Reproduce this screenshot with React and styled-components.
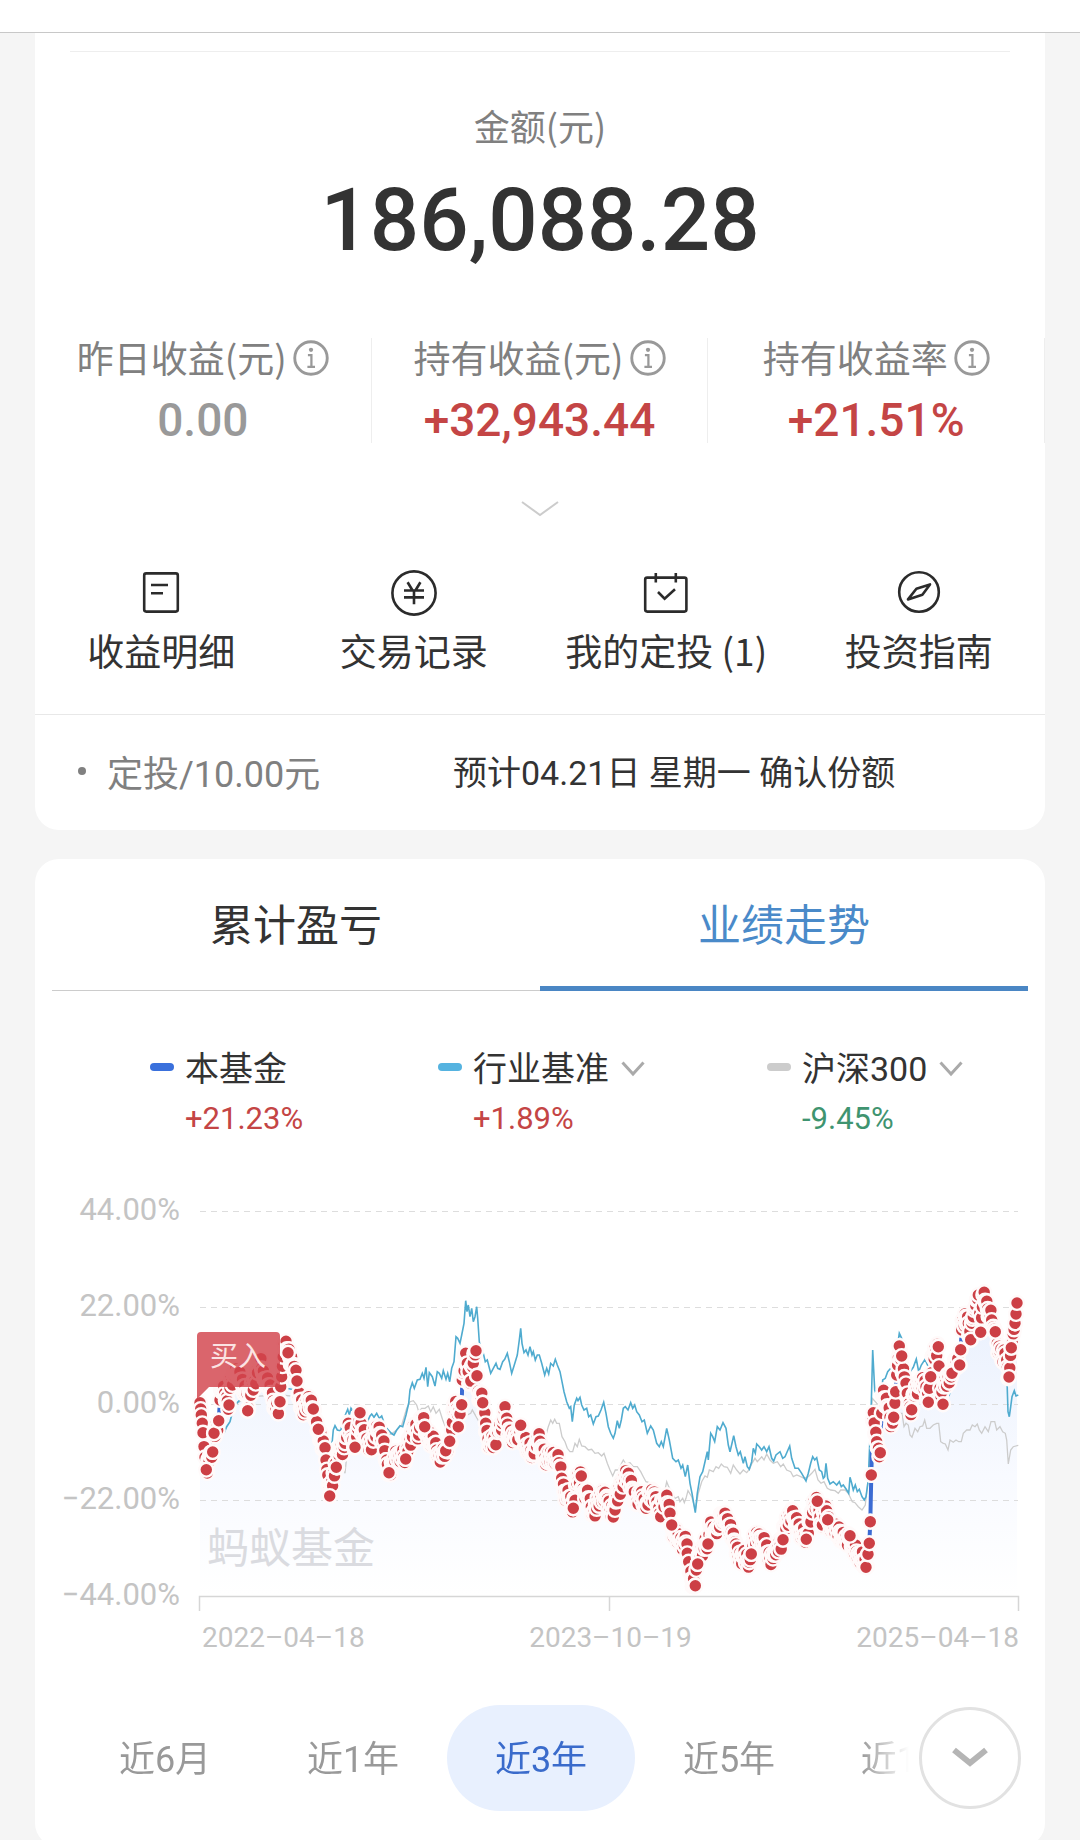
import React, { useState } from 'react';
import styled, { createGlobalStyle } from 'styled-components';

const GlobalStyle = createGlobalStyle`
  * {
    box-sizing: border-box;
  }

  body {
    margin: 0;
    background: #f5f5f5;
    color: #333333;
    font-family: Roboto, 'Noto Sans CJK SC', sans-serif;
  }

  button {
    padding: 0;
    border: 0;
    background: none;
    color: inherit;
    font: inherit;
    cursor: pointer;
  }

  a {
    color: inherit;
    text-decoration: none;
  }

  svg {
    display: block;
  }
`;

const TopBar = styled.header`
  height: 33px;
  background: #ffffff;
  border-bottom: 1px solid #c8c8c8;
`;

const Page = styled.main`
  padding: 0 35px 24px;
  display: flex;
  flex-direction: column;
  gap: 29px;
`;

const Card = styled.section`
  background: #ffffff;
  border-radius: ${({ $flatTop }) => ($flatTop ? '0 0 24px 24px' : '24px')};
  overflow: hidden;
`;

const TopRule = styled.hr`
  margin: 18px 35px 0;
  border: 0;
  border-top: 1px solid #eeeeee;
`;

const Balance = styled.div`
  margin-top: 46px;
  text-align: center;
`;

const BalanceLabel = styled.h1`
  margin: 0;
  font-family: 'Noto Sans CJK SC', sans-serif;
  font-size: 36px;
  font-weight: 400;
  line-height: 54px;
  color: #808080;
`;

const BalanceValue = styled.div`
  margin-top: 18px;
  font-size: 87px;
  font-weight: 500;
  line-height: 100px;
`;

const Stats = styled.div`
  margin-top: 68px;
  display: grid;
  grid-template-columns: repeat(3, 1fr);
`;

const Stat = styled.div`
  display: flex;
  flex-direction: column;
  align-items: center;
  gap: 21px;
  border-right: 1px solid #eeeeee;
`;

const StatLabel = styled.div`
  display: flex;
  align-items: flex-end;
  gap: 6px;
  font-family: 'Noto Sans CJK SC', sans-serif;
  font-size: 37px;
  line-height: 38px;
  color: #808080;
`;

const StatValue = styled.div`
  font-size: 46px;
  font-weight: 500;
  line-height: 46px;
  color: ${({ $color }) => $color};
`;

const ExpandButton = styled.button`
  display: flex;
  align-items: center;
  justify-content: center;
  width: 80px;
  height: 40px;
  margin: 46px auto 0;
`;

const Actions = styled.nav`
  margin-top: 41px;
  padding-bottom: 41px;
  display: grid;
  grid-template-columns: repeat(4, 1fr);
  border-bottom: 1px solid #e8e8e8;
`;

const Action = styled.a`
  display: flex;
  flex-direction: column;
  align-items: center;
  gap: 11px;
  font-family: 'Noto Sans CJK SC', sans-serif;
  font-size: 37px;
  line-height: 46px;
`;

const PlanRow = styled.div`
  display: flex;
  align-items: center;
  height: 115px;
  padding: 0 0 4px 43px;
`;

const PlanName = styled.div`
  display: flex;
  align-items: center;
  gap: 21px;
  width: 375px;
  font-size: 36px;
  color: #808080;

  &::before {
    content: '';
    width: 8px;
    height: 8px;
    border-radius: 50%;
    background: #808080;
  }
`;

const PlanNote = styled.div`
  font-size: 34px;
`;

const Tabs = styled.div`
  margin: 0 17px;
  display: grid;
  grid-template-columns: 1fr 1fr;
`;

const Tab = styled.button`
  height: 132px;
  padding-bottom: 6px;
  font-size: 43px;
  color: ${({ $active }) => ($active ? '#4a8ac9' : '#333333')};
  box-shadow: inset 0 ${({ $active }) => ($active ? '-5px #4a86c4' : '-1px #cccccc')};
`;

const Legend = styled.div`
  margin-top: 56px;
  padding: 0 88px 0 115px;
  display: grid;
  grid-template-columns: 288fr 329fr 190fr;
`;

const LegendItem = styled.div`
  min-width: 0;
  display: grid;
  grid-template-columns: 24px auto;
  column-gap: 11px;
  row-gap: 6px;
  align-items: center;
  justify-content: start;
  line-height: 44px;
`;

const Swatch = styled.span`
  height: 8px;
  margin-bottom: 4px;
  border-radius: 4px;
  background: ${({ $color }) => $color};
`;

const LegendName = styled.div`
  font-size: 34px;
  white-space: nowrap;

  button {
    display: flex;
    align-items: center;
    gap: 12px;
  }
`;

const LegendValue = styled.div`
  grid-column: 2;
  font-size: 31px;
  color: ${({ $down }) => ($down ? '#3f9470' : '#c44545')};
`;

const ChartRow = styled.div`
  margin-top: 49px;
  padding-right: 15px;
  display: flex;

  svg {
    flex: 1;
    min-width: 0;
  }
`;

const YAxis = styled.div`
  width: 145px;
  display: flex;
  flex-direction: column;
  justify-content: space-between;
  text-align: right;
  font-size: 31px;
  line-height: 40px;
  color: #c4c4c4;
`;

const XAxis = styled.div`
  margin-top: 5px;
  padding: 0 26px 0 167px;
  display: flex;
  justify-content: space-between;
  font-size: 28px;
  line-height: 36px;
  color: #c4c4c4;
`;

const Periods = styled.div`
  margin: 49px 24px 36px 36px;
  display: flex;
  align-items: center;
`;

const PeriodStrip = styled.div`
  flex: 1;
  min-width: 0;
  display: flex;
  overflow: hidden;
  mask-image: linear-gradient(to right, #000 calc(100% - 52px), transparent calc(100% - 4px));
`;

const Period = styled.button`
  flex: 0 0 188px;
  height: 106px;
  padding-bottom: 4px;
  border-radius: 53px;
  font-size: 36px;
  color: ${({ $active }) => ($active ? '#3a6bcb' : '#999999')};
  background: ${({ $active }) => ($active ? '#e8f0fe' : 'transparent')};
`;

const MoreButton = styled.button`
  flex: none;
  display: flex;
  align-items: center;
  justify-content: center;
  width: 102px;
  height: 102px;
  margin-left: 6px;
  border: 3px solid #e2e2e2;
  border-radius: 50%;
`;

const InfoIcon = () => (
  <svg width="36" height="36" viewBox="0 0 35 35" fill="none" stroke="#999999">
    <circle cx="17.5" cy="17.5" r="15.8" strokeWidth="2.8" />
    <circle cx="17.5" cy="9.6" r="2.1" fill="#999999" stroke="none" />
    <path d="M14.5 14.6h3.4v11.4M14 26.2h7.4" strokeWidth="2.2" />
  </svg>
);

const Chevron = ({ width, height, stroke, weight }) => (
  <svg width={width} height={height} viewBox={`0 0 ${width} ${height}`} fill="none">
    <path
      d={`M${weight / 2} ${weight / 2}L${width / 2} ${height - weight}L${width - weight / 2} ${weight / 2}`}
      stroke={stroke}
      strokeWidth={weight}
    />
  </svg>
);

const ActionIcon = ({ children }) => (
  <svg width="46" height="46" viewBox="0 0 46 46" fill="none" stroke="#2b2b2b" strokeWidth="2.6">
    {children}
  </svg>
);

const actions = [
  {
    label: '收益明细',
    icon: (
      <>
        <rect x="6.2" y="3.4" width="33.6" height="38.2" rx="2" />
        <path d="M13 15h17M13 23.3h12" />
      </>
    ),
  },
  {
    label: '交易记录',
    icon: (
      <>
        <circle cx="23" cy="23" r="21.6" />
        <path d="M16.6 12.3l5 8.2M29.4 12.3l-5 8.2M13 20.5h20M13 27.4h20M23 20.5v13.8" />
      </>
    ),
  },
  {
    label: '我的定投 (1)',
    icon: (
      <>
        <rect x="2.2" y="7.6" width="41.2" height="34" rx="2" />
        <path d="M12.8 3v9.4M32.8 3v9.4M15 22l6.6 6.6L32 19.2" />
      </>
    ),
  },
  {
    label: '投资指南',
    icon: (
      <>
        <circle cx="23" cy="22" r="19.8" />
        <path d="M34 14.4l-7.6 10.4L12 29.4l8.4-10.6z" strokeLinejoin="round" />
      </>
    ),
  },
];

const stats = [
  { label: '昨日收益(元)', value: '0.00', color: '#999999' },
  { label: '持有收益(元)', value: '+32,943.44', color: '#c44545' },
  { label: '持有收益率', value: '+21.51%', color: '#c44545' },
];

const legend = [
  { name: '本基金', value: '+21.23%', color: '#3a70dc' },
  { name: '行业基准', value: '+1.89%', color: '#55b3e0', select: true },
  { name: '沪深300', value: '-9.45%', color: '#cccccc', select: true, down: true },
];

const periods = ['近6月', '近1年', '近3年', '近5年', '近10年'];

// Series are stored as "x,y" samples at three units per chart pixel
const parse = (text) =>
  text
    .trim()
    .split(/\s+/)
    .map((pair) => pair.split(',').map(Number))
    .map(([x, y]) => [x / 3, y / 3 + 90]);

const toPath = (points) =>
  'M' + points.map(([x, y]) => `${x.toFixed(1)} ${y.toFixed(1)}`).join('L');

const industry = parse(`
  60,368 66,440 75,520 95,500 115,440 133,458 140,440 150,425 155,405 170,370 200,340 240,330 262,320
  290,345 320,325 345,330 360,325 380,360 400,400 420,450 440,500 457,482 460,450 465,437 472,450 482,452
  490,420 498,400 503,388 508,405 513,385 520,395 530,400 545,425 560,430 570,408 575,402 582,412 590,400
  598,415 605,408 612,428 620,445 634,460 642,465 650,450 660,437 668,440 678,405 686,370 690,330 697,308
  703,325 712,300 720,298 727,280 732,295 738,262 743,320 748,278 757,290 765,318 772,275 778,280 785,295
  790,272 798,298 803,280 809,305 815,265 822,245 828,170 833,175 840,190 845,165 852,130 857,62 861,95
  865,75 870,110 875,85 880,125 885,110 890,80 893,115 898,185 905,225 910,220 916,245 922,240 932,280
  940,265 948,250 953,265 960,268 968,245 974,238 982,220 988,245 995,280 1003,255 1012,225 1018,180
  1022,145 1026,190 1032,218 1038,210 1044,225 1050,200 1056,225 1060,215 1066,240 1072,225 1078,225
  1085,250 1094,285 1100,265 1106,282 1112,250 1120,258 1126,238 1132,255 1140,275 1146,305 1152,335
  1160,365 1168,385 1172,380 1177,425 1183,375 1190,355 1194,362 1200,352 1205,375 1212,390 1220,385
  1226,410 1232,405 1240,432 1248,410 1255,408 1263,390 1271,367 1278,400 1285,440 1292,460 1300,475
  1305,460 1312,422 1318,445 1324,420 1330,385 1336,380 1344,390 1352,368 1358,385 1364,375 1370,395
  1378,405 1386,425 1393,420 1402,460 1412,438 1420,450 1430,490 1438,500 1444,485 1450,500 1460,445
  1468,480 1478,535 1488,545 1495,540 1503,565 1508,555 1516,590 1523,555 1530,610 1536,640 1546,698
  1552,640 1560,590 1568,575 1575,545 1582,515 1585,540 1592,460 1598,470 1604,485 1612,440 1620,450
  1629,428 1638,445 1645,495 1650,515 1656,490 1661,467 1668,500 1675,525 1681,515 1690,550 1695,530
  1702,560 1708,568 1715,545 1720,505 1726,520 1730,492 1738,500 1745,510 1752,500 1760,515 1767,500
  1775,535 1781,543 1788,525 1800,515 1808,535 1815,530 1829,498 1835,535 1845,565 1855,565 1865,580
  1878,603 1885,580 1892,550 1898,530 1904,540 1910,533 1918,570 1925,575 1930,595 1934,590 1938,550
  1943,595 1950,612 1960,605 1970,615 1978,605 1984,620 1990,615 2000,630 2006,640 2010,592 2015,610
  2020,630 2026,615 2032,635 2038,628 2046,650 2053,660 2058,650 2065,600 2070,470 2074,370 2078,210
  2084,330 2095,360 2106,330 2108,300 2116,295 2123,275 2132,265 2142,255 2150,200 2155,180 2158,160
  2165,175 2175,220 2184,255 2190,275 2200,262 2209,237 2216,275 2224,255 2235,238 2245,260 2260,290
  2275,310 2290,330 2308,345 2320,280 2340,240 2360,120 2395,60 2415,65 2440,140 2460,220 2480,240
  2482,330 2484,395 2488,410 2492,380 2496,350 2503,332 2508,348 2515,345
`);

const csi300 = parse(`
  60,368 75,500 98,480 130,400 200,350 300,345 355,350 400,400 440,510 460,560 480,520 495,580 500,530
  540,440 600,470 634,462 650,450 665,435 680,385 690,365 700,362 710,375 716,395 725,385 735,385 745,378
  752,395 760,380 768,400 778,388 788,420 800,450 815,440 840,420 862,405 872,400 877,390 900,430 960,440
  1020,470 1060,490 1098,465 1105,440 1112,420 1118,430 1124,418 1130,430 1138,430 1146,470 1155,485
  1162,505 1170,515 1178,515 1185,490 1192,500 1198,478 1205,498 1215,500 1225,510 1235,508 1245,520
  1255,518 1265,528 1272,520 1282,550 1290,570 1298,588 1306,570 1315,570 1322,555 1330,540 1338,552
  1350,548 1360,560 1372,560 1382,575 1390,590 1398,605 1415,610 1430,625 1445,635 1455,630 1460,605
  1466,620 1475,635 1485,655 1495,650 1500,665 1508,655 1513,668 1518,655 1524,632 1535,650 1546,690
  1555,640 1565,605 1575,588 1582,592 1588,570 1600,575 1608,560 1616,565 1624,552 1632,560 1642,562
  1652,580 1660,555 1670,570 1680,582 1690,570 1700,578 1708,568 1716,550 1725,535 1732,545 1745,530
  1752,540 1760,522 1770,540 1780,550 1792,545 1802,560 1810,552 1820,570 1832,575 1840,590 1850,585
  1862,590 1872,595 1885,590 1895,580 1905,568 1914,600 1923,610 1932,605 1942,625 1952,630 1965,632
  1975,640 1982,630 1995,630 2005,640 2017,665 2025,668 2035,680 2046,690 2056,675 2062,620 2068,560
  2073,420 2077,355 2090,370 2120,400 2160,400 2166,400 2172,440 2178,430 2185,435 2190,465 2196,472
  2205,445 2213,455 2220,440 2228,438 2234,420 2240,445 2250,445 2260,435 2270,430 2276,430 2282,485
  2290,490 2296,492 2304,510 2310,480 2320,487 2328,480 2336,485 2344,485 2350,460 2360,450 2370,450
  2377,435 2385,440 2392,432 2398,450 2405,460 2415,440 2425,455 2433,425 2444,425 2450,450 2460,440
  2468,455 2476,460 2480,480 2485,552 2492,510 2500,500 2515,496
`);

const fund = parse(`
  60,368 62,387 64,405 67,430 69,458 75,532 79,569 90,525 98,516 102,460 116,422 120,360 128,330 140,350
  147,375 150,325 165,280 172,278 185,310 200,340 203,392 210,340 225,300 240,240 248,278 255,300 268,325
  275,345 285,370 293,400 300,365 302,320 305,290 312,192 324,218 340,255 345,280 351,303 355,350 360,360
  375,395 388,360 400,387 407,420 415,448 425,480 435,503 438,540 446,615 449,648 455,605 469,562 480,515
  495,490 505,430 516,480 525,502 530,470 540,398 543,430 548,450 558,490 572,495 585,460 595,450 605,465
  609,492 620,540 627,578 640,540 655,520 677,537 681,505 690,480 705,445 716,465 722,415 734,440 740,455
  755,480 765,500 775,520 787,530 797,512 809,484 815,450 822,375 835,390 845,374 847,300 850,280 857,220
  862,250 870,310 880,250 888,212 891,287 895,333 908,368 912,400 917,430 918,455 930,490 945,490 956,440
  965,450 975,380 980,415 990,470 1005,480 1022,436 1030,470 1045,500 1058,525 1065,495 1072,470
  1085,500 1100,540 1115,530 1128,530 1140,560 1145,595 1148,615 1153,635 1170,660 1180,685 1183,655
  1190,610 1204,588 1210,625 1220,645 1228,665 1240,695 1255,670 1270,640 1280,650 1290,690 1305,690
  1308,665 1318,635 1332,590 1348,598 1360,630 1369,672 1385,635 1398,685 1410,640 1425,645 1442,710
  1446,660 1458,660 1465,680 1470,700 1475,735 1485,765 1500,785 1521,792 1522,820 1526,845 1530,880
  1546,917 1549,870 1553,852 1560,825 1570,800 1584,792 1590,735 1605,755 1613,745 1625,705 1640,728
  1660,760 1665,785 1675,830 1690,830 1708,847 1714,822 1716,795 1738,762 1755,800 1770,835 1782,825
  1790,805 1809,779 1815,740 1838,692 1842,715 1855,740 1879,778 1888,725 1895,695 1912,664 1925,740
  1932,700 1940,692 1943,719 1960,745 1980,755 1995,790 2010,767 2015,800 2035,820 2050,840 2058,862
  2064,823 2068,790 2071,725 2074,585 2078,420 2080,398 2085,462 2090,485 2093,505 2098,530 2101,518
  2105,400 2108,345 2125,385 2135,430 2141,412 2145,370 2147,335 2150,285 2158,198 2165,228 2168,280
  2178,310 2182,340 2188,370 2195,389 2205,340 2220,310 2238,320 2245,367 2248,325 2252,290 2260,230
  2275,200 2277,258 2280,325 2289,373 2292,320 2305,290 2316,280 2325,240 2339,255 2342,209 2345,150
  2358,110 2365,130 2372,179 2375,130 2390,60 2395,45 2399,100 2402,157 2410,45 2418,70 2428,95 2435,120
  2440,140 2446,155 2452,190 2460,215 2466,240 2475,220 2480,240 2487,291 2494,203 2505,130 2508,102
  2511,69
`);

// Turning points that stay in front of their neighbours
const peaks = parse(`
  79,569 98,516 102,460 116,422 203,392 300,365 324,218 351,303 400,387 415,448 449,648 469,562 540,398
  525,502 627,578 677,537 734,440 797,512 809,484 835,440 845,374 888,212 891,287 908,368 1022,436
  1180,685 1204,588 1475,735 1546,917 1553,852 1584,792 1714,822 1809,779 1879,778 1912,664 1943,719
  2010,767 2058,862 2064,823 2068,790 2071,725 2074,585 2101,518 2141,412 2158,198 2165,228 2195,389
  2245,367 2252,290 2275,200 2289,373 2316,280 2339,255 2342,209 2372,179 2402,157 2446,155 2487,291
  2494,203 2505,130 2508,102 2511,69
`);

// One purchase marker per trading day, scattered around the fund line
const buys = fund.slice(1).reduce(
  (dots, [x, y], index) => {
    const [fromX, fromY] = fund[index];
    const rise = Math.abs(y - fromY);
    const days = Math.max(1, Math.round((x - fromX) / 0.9));
    const spread = rise > 20 ? 0.4 : 1.4;
    for (let day = 1; day <= days; day += 1) {
      const wobble = day === days ? 0 : (((dots.length * 37) % 11) - 5) * spread;
      dots.push([
        fromX + ((x - fromX) * day) / days,
        fromY + ((y - fromY) * day) / days + wobble,
      ]);
    }
    return dots;
  },
  [fund[0]]
);

const Dot = ({ at: [x, y] }) => (
  <circle cx={x.toFixed(1)} cy={y.toFixed(1)} r="6.9" fill="#cc3f45" stroke="#fffafa" strokeWidth="2.4" />
);

const TrendChart = () => (
  <svg viewBox="0 0 850 425" role="img" aria-label="业绩走势">
    <defs>
      <linearGradient id="fund-fill" x1="0" y1="0" x2="0" y2="1">
        <stop offset="0" stopColor="#e9f0fd" />
        <stop offset="0.6" stopColor="#f8faff" />
        <stop offset="1" stopColor="#ffffff" />
      </linearGradient>
    </defs>
    <path d={`${toPath(fund)}V406H20Z`} fill="url(#fund-fill)" />
    {[21, 117, 214, 310].map((y) => (
      <path key={y} d={`M20 ${y}.5H838`} stroke="#dddddd" strokeDasharray="6 5" />
    ))}
    <path d="M19.5 421V406.5H838.5V421M429.5 406V421" fill="none" stroke="#d6d6d6" strokeWidth="1.5" />
    <text x="27" y="373" fontSize="42" fill="#dadbe0" fontFamily="'Noto Sans CJK SC', sans-serif">
      蚂蚁基金
    </text>
    <path d={toPath(csi300)} fill="none" stroke="#cccccc" strokeWidth="1.3" />
    <path d={toPath(industry)} fill="none" stroke="#4fabcf" strokeWidth="1.6" />
    <path d={toPath(fund)} fill="none" stroke="#3b6bd3" strokeWidth="4" />
    {buys.map((dot, index) => (
      <Dot key={index} at={dot} />
    ))}
    {peaks.map((dot, index) => (
      <Dot key={index} at={dot} />
    ))}
    <path
      d="M21 142H96a4 4 0 0 1 4 4V193a4 4 0 0 1-4 4H29L17 209V146a4 4 0 0 1 4-4Z"
      fill="#d2434c"
      fillOpacity="0.82"
    />
    <text x="30" y="176" fontSize="28" fill="#fbe3e3" fontFamily="'Noto Sans CJK SC', sans-serif">
      买入
    </text>
  </svg>
);

const App = () => {
  const [tab, setTab] = useState('业绩走势');
  const [period, setPeriod] = useState('近3年');

  return (
    <>
      <GlobalStyle />
      <TopBar />
      <Page>
        <Card $flatTop>
          <TopRule />
          <Balance>
            <BalanceLabel>金额(元)</BalanceLabel>
            <BalanceValue>186,088.28</BalanceValue>
          </Balance>
          <Stats>
            {stats.map((stat) => (
              <Stat key={stat.label}>
                <StatLabel>
                  {stat.label}
                  <button type="button" aria-label={`${stat.label}说明`}>
                    <InfoIcon />
                  </button>
                </StatLabel>
                <StatValue $color={stat.color}>{stat.value}</StatValue>
              </Stat>
            ))}
          </Stats>
          <ExpandButton type="button" aria-label="展开">
            <Chevron width={38} height={16} stroke="#cccccc" weight={2} />
          </ExpandButton>
          <Actions>
            {actions.map((action) => (
              <Action key={action.label} href="#">
                <ActionIcon>{action.icon}</ActionIcon>
                {action.label}
              </Action>
            ))}
          </Actions>
          <PlanRow>
            <PlanName>定投/10.00元</PlanName>
            <PlanNote>预计04.21日 星期一 确认份额</PlanNote>
          </PlanRow>
        </Card>

        <Card>
          <Tabs role="tablist">
            {['累计盈亏', '业绩走势'].map((name) => (
              <Tab
                key={name}
                type="button"
                role="tab"
                aria-selected={tab === name}
                $active={tab === name}
                onClick={() => setTab(name)}
              >
                {name}
              </Tab>
            ))}
          </Tabs>
          <Legend>
            {legend.map((item) => (
              <LegendItem key={item.name}>
                <Swatch $color={item.color} />
                <LegendName>
                  {item.select ? (
                    <button type="button">
                      {item.name}
                      <Chevron width={24} height={16} stroke="#aaaaaa" weight={3} />
                    </button>
                  ) : (
                    item.name
                  )}
                </LegendName>
                <LegendValue $down={item.down}>{item.value}</LegendValue>
              </LegendItem>
            ))}
          </Legend>
          <ChartRow>
            <YAxis>
              <span>44.00%</span>
              <span>22.00%</span>
              <span>0.00%</span>
              <span>−22.00%</span>
              <span>−44.00%</span>
            </YAxis>
            <TrendChart />
          </ChartRow>
          <XAxis>
            <span>2022–04–18</span>
            <span>2023–10–19</span>
            <span>2025–04–18</span>
          </XAxis>
          <Periods>
            <PeriodStrip>
              {periods.map((name) => (
                <Period
                  key={name}
                  type="button"
                  $active={period === name}
                  onClick={() => setPeriod(name)}
                >
                  {name}
                </Period>
              ))}
            </PeriodStrip>
            <MoreButton type="button" aria-label="更多区间">
              <Chevron width={38} height={22} stroke="#b5b5b5" weight={6} />
            </MoreButton>
          </Periods>
        </Card>
      </Page>
    </>
  );
};

export default App;
